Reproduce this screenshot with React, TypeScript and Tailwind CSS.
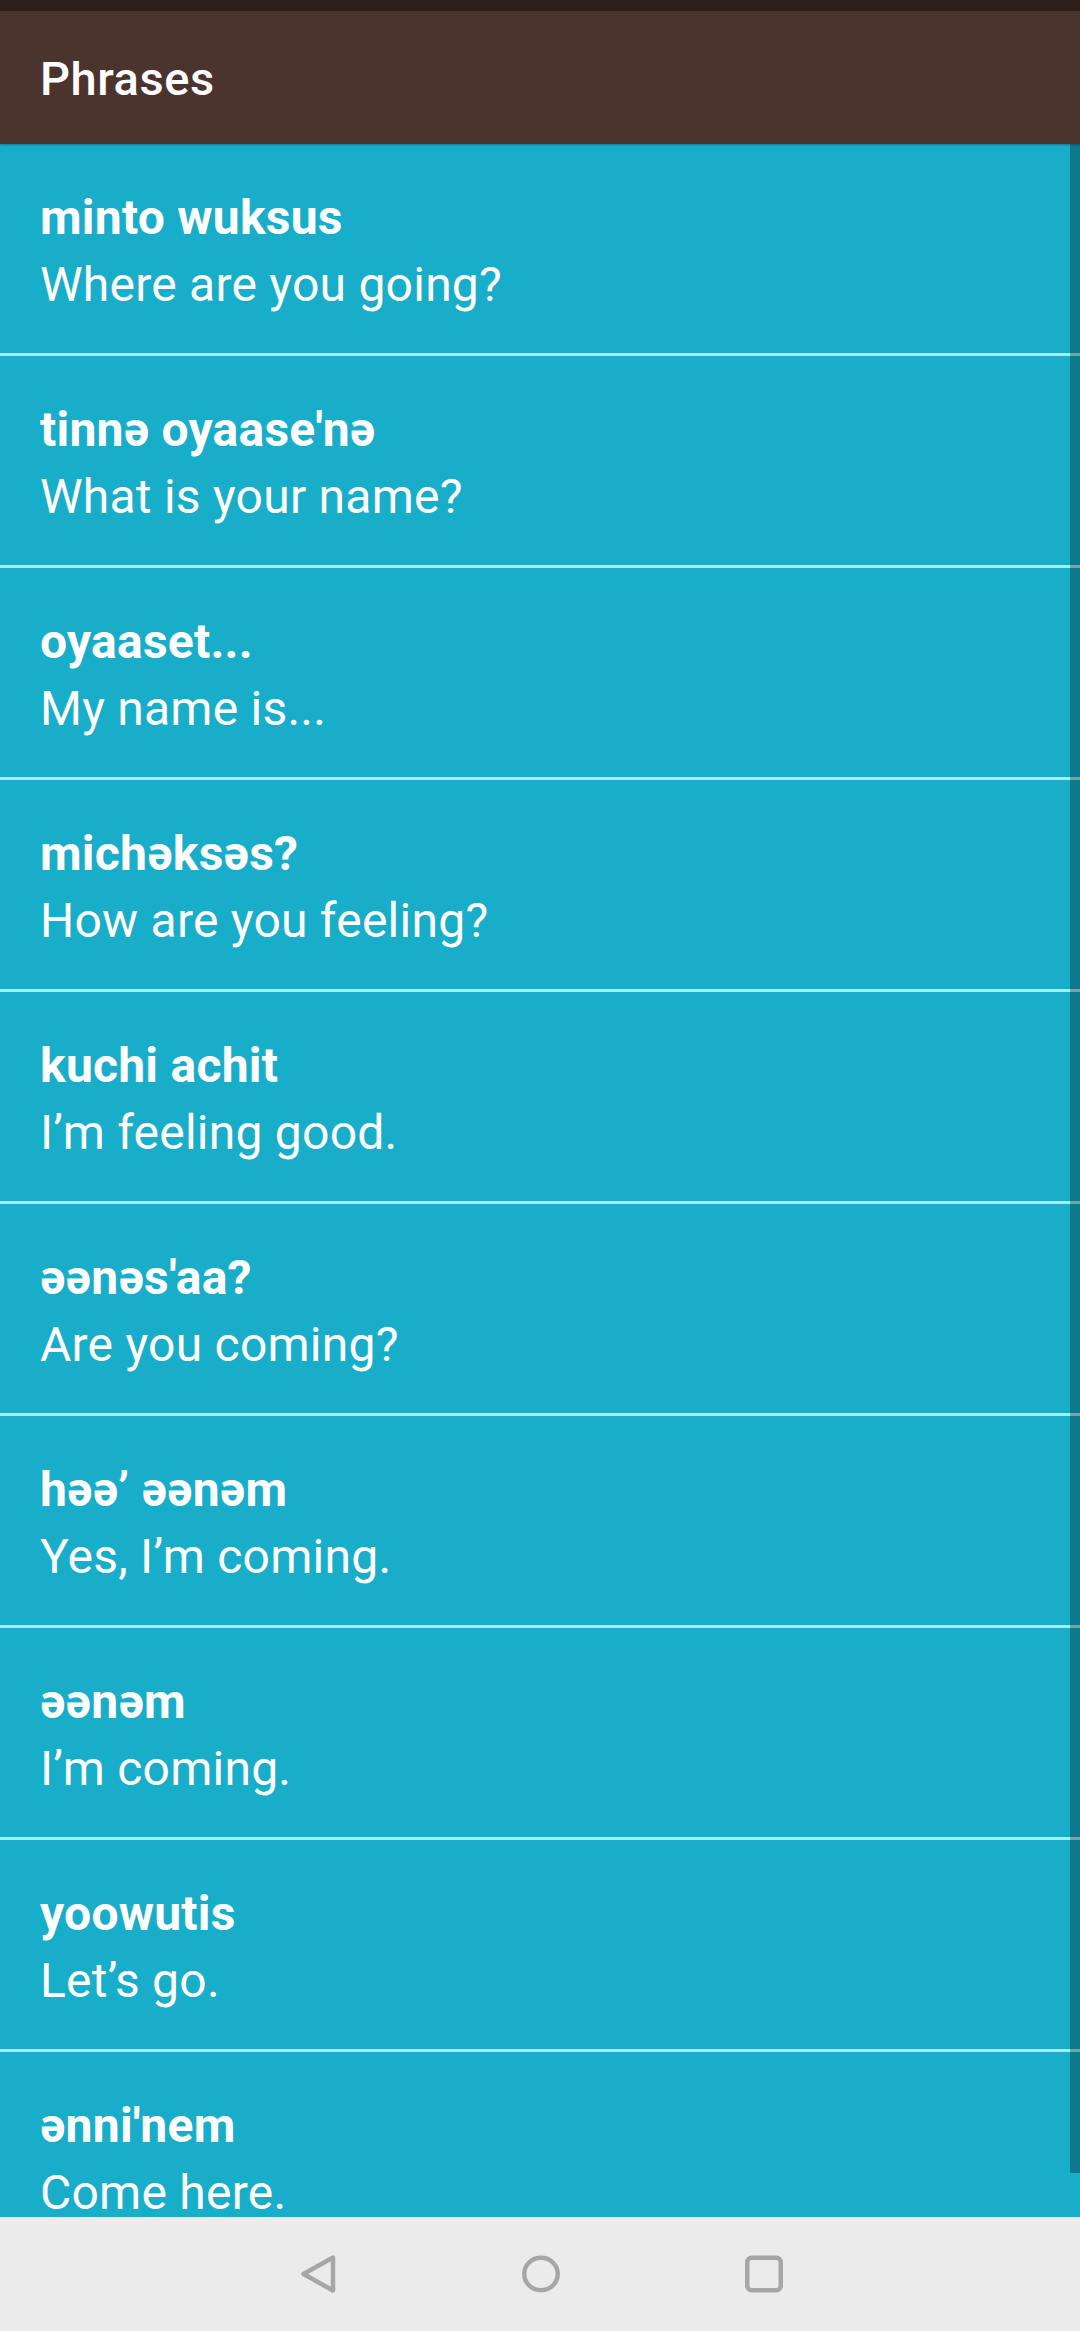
import React from 'react';

const phrases = [
    { word: "minto wuksus", meaning: "Where are you going?" },
    { word: "tinnə oyaase'nə", meaning: "What is your name?" },
    { word: "oyaaset...", meaning: "My name is..." },
    { word: "michəksəs?", meaning: "How are you feeling?" },
    { word: "kuchi achit", meaning: "I\u2019m feeling good." },
    { word: "əənəs'aa?", meaning: "Are you coming?" },
    { word: "həə\u2019 əənəm", meaning: "Yes, I\u2019m coming." },
    { word: "əənəm", meaning: "I\u2019m coming." },
    { word: "yoowutis", meaning: "Let\u2019s go." },
    { word: "ənni'nem", meaning: "Come here." },
];

function NavBar() {
    return (
        <div className="h-[114px] shrink-0 bg-[#ebebeb] flex items-center pl-[298px] gap-[183px]">
            {/* back */}
            <svg width="40" height="40" viewBox="0 0 40 40" fill="none">
                <path d="M5.5 20 L35 3.5 L35 36.5 Z" stroke="#a6a6a6" strokeWidth="4.5" strokeLinejoin="round" />
            </svg>
            {/* home */}
            <svg width="40" height="40" viewBox="0 0 40 40" fill="none">
                <ellipse cx="20" cy="20" rx="16.75" ry="16.25" stroke="#a6a6a6" strokeWidth="4.5" />
            </svg>
            {/* recents */}
            <svg width="40" height="40" viewBox="0 0 40 40" fill="none">
                <rect x="3.25" y="3.75" width="33.5" height="32.5" rx="4.5" stroke="#a6a6a6" strokeWidth="4.5" />
            </svg>
        </div>
    );
}

export default function App() {
    return (
        <div className="w-[1080px] h-[2331px] flex flex-col overflow-hidden bg-[#18adc9] font-['Roboto',sans-serif] text-white">
            {/* status bar */}
            <div className="h-[11px] shrink-0 bg-[#2f1f1b]" />

            {/* app bar */}
            <div className="h-[133px] shrink-0 bg-[#4b332e] flex items-center pl-[40px] pt-[2px] shadow-[0_1px_2px_rgba(0,0,0,0.3)] relative z-10">
                <h1 className="text-[47px] font-medium leading-[55px] tracking-[0.012em]">Phrases</h1>
            </div>

            {/* list */}
            <div className="relative flex-1 min-h-0 overflow-hidden">
                <div className="flex flex-col">
                    {phrases.map((p, i) => (
                        <div key={i} className="shrink-0">
                            <div className="h-[209px] flex flex-col justify-center pl-[40px] pt-[4px] text-[48px] tracking-[0.005em]">
                                <div className="font-bold leading-[67px]">{p.word}</div>
                                <div className="font-normal leading-[67px]">{p.meaning}</div>
                            </div>
                            <div className="h-[3px] bg-[#b5e6ee]" />
                        </div>
                    ))}
                </div>

                {/* scrollbar thumb */}
                <div className="absolute right-0 top-0 w-[10px] h-[2029px] bg-black/30" />
            </div>

            <NavBar />
        </div>
    );
}
